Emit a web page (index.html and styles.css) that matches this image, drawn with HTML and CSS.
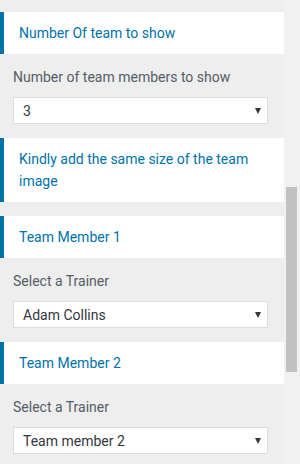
FILE: index.html
```html
<!DOCTYPE html>
<html lang="en">
<head>
  <meta charset="UTF-8">
  <meta name="viewport" content="width=device-width, initial-scale=1.0">
  <title>Team Settings</title>
  <link rel="stylesheet" href="styles.css">
</head>
<body>
  <div class="frame">
    <div class="panel">
      <div class="section-title">Number Of team to show</div>
      <div class="field">
        <label class="field-label">Number of team members to show</label>
        <div class="select-box">
          <span>3</span>
          <span class="arrow"></span>
        </div>
      </div>

      <div class="section-title">Kindly add the same size of the team image</div>

      <div class="section-title">Team Member 1</div>
      <div class="field">
        <label class="field-label">Select a Trainer</label>
        <div class="select-box">
          <span>Adam Collins</span>
          <span class="arrow"></span>
        </div>
      </div>

      <div class="section-title">Team Member 2</div>
      <div class="field">
        <label class="field-label">Select a Trainer</label>
        <div class="select-box">
          <span>Team member 2</span>
          <span class="arrow"></span>
        </div>
      </div>
    </div>

    <div class="scrollbar">
      <div class="scroll-thumb"></div>
    </div>
  </div>
</body>
</html>
```

FILE: styles.css
```css
:root {
  --bg-gray: #eeeeee;
  --track: #f1f1f1;
  --thumb: #c1c1c1;
  --accent: #0073aa;
  --label: #555d66;
  --text-dark: #32373c;
  --border: #dddddd;
}

body {
  margin: 0;
  padding: 0;
  font-family: Roboto, "Noto Sans", "Liberation Sans", sans-serif;
  font-size: 14px;
  background-color: var(--bg-gray);
  height: 464px;
  overflow: hidden;
}

.frame {
  display: flex;
  height: 464px;
}

.panel {
  width: 284px;
  padding-top: 12px;
  display: flex;
  flex-direction: column;
  gap: 14px;
}

.section-title {
  background-color: #fff;
  border-left: 4px solid var(--accent);
  color: var(--accent);
  line-height: 22px;
  padding: 10px 16px 10px 15px;
}

.field {
  padding: 0 16px 0 13px;
  display: flex;
  flex-direction: column;
}

.field-label {
  color: var(--label);
  line-height: 18px;
  margin-bottom: 11px;
}

.select-box {
  background-color: #fff;
  border: 1px solid var(--border);
  height: 25px;
  display: flex;
  align-items: center;
  justify-content: space-between;
  padding: 0 5px 0 9px;
  color: var(--text-dark);
}

.arrow {
  width: 0;
  height: 0;
  border-left: 3.5px solid transparent;
  border-right: 3.5px solid transparent;
  border-top: 6px solid var(--text-dark);
  margin-right: 1px;
}

.scrollbar {
  width: 16px;
  background-color: var(--track);
}

.scroll-thumb {
  margin: 187px 3px 0 2px;
  height: 185px;
  background-color: var(--thumb);
}
```
